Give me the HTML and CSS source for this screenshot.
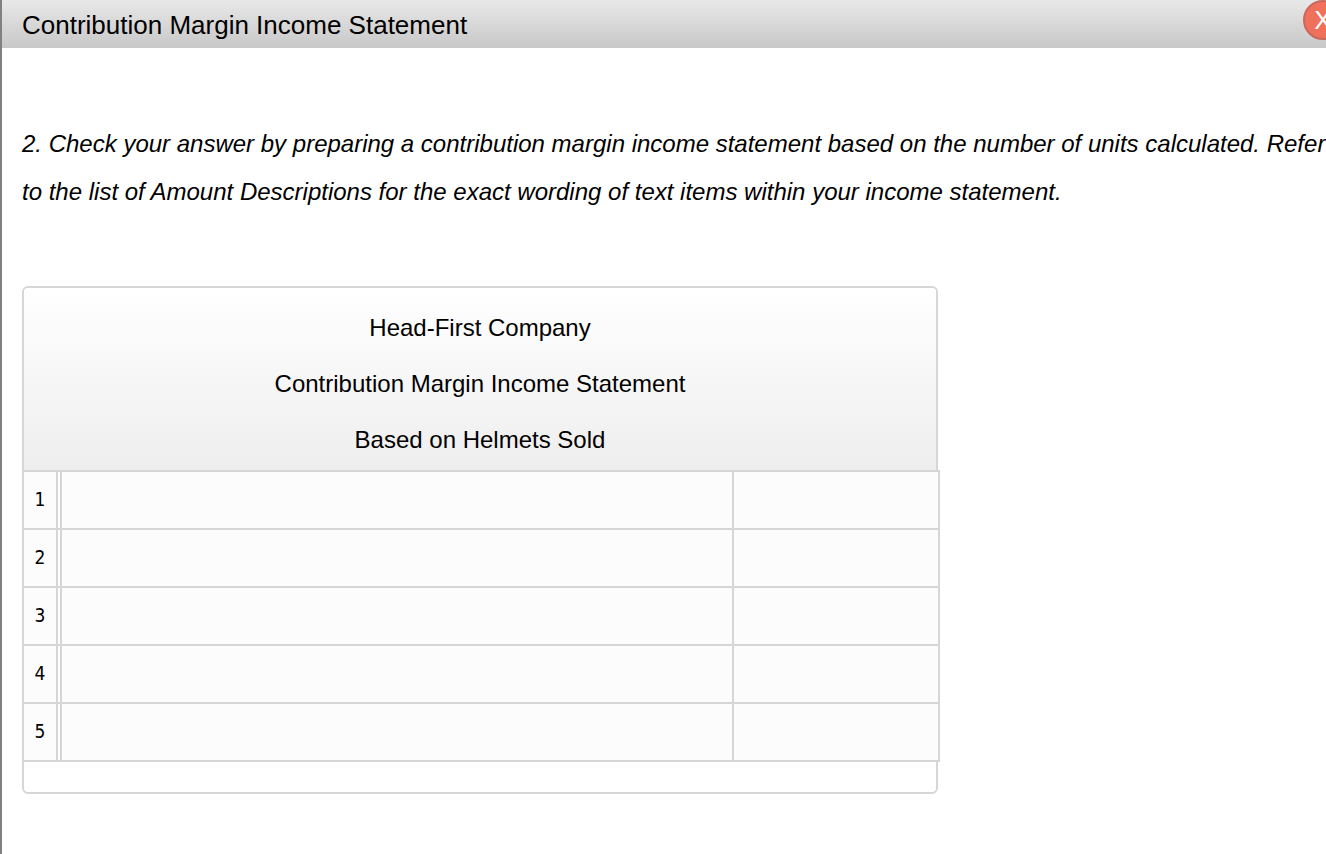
FILE: index.html

```html
<!DOCTYPE html>
<html lang="en">
<head>
  <meta charset="UTF-8" />
  <title>Contribution Margin Income Statement</title>
  <link rel="stylesheet" href="styles.css">
</head>
<body>
  <div class="dialog">
    <div class="titlebar">
      <h1>Contribution Margin Income Statement</h1>
      <span class="close">X</span>
    </div>

    <div class="content">
      <p class="question">2. Check your answer by preparing a contribution margin income statement based on the number of units calculated. Refer<br>to the list of Amount Descriptions for the exact wording of text items within your income statement.</p>

      <div class="card">
        <div class="card-head">
          <div>Head-First Company</div>
          <div>Contribution Margin Income Statement</div>
          <div>Based on Helmets Sold</div>
        </div>
        <div class="rows">
          <div class="row"><div class="num">1</div><div class="cell"></div><div class="cell"></div></div>
          <div class="row"><div class="num">2</div><div class="cell"></div><div class="cell"></div></div>
          <div class="row"><div class="num">3</div><div class="cell"></div><div class="cell"></div></div>
          <div class="row"><div class="num">4</div><div class="cell"></div><div class="cell"></div></div>
          <div class="row"><div class="num">5</div><div class="cell"></div><div class="cell"></div></div>
        </div>
        <div class="card-foot"></div>
      </div>
    </div>
  </div>
</body>
</html>
```

FILE: styles.css

```css
html, body {
  margin: 0;
  height: 100%;
  overflow: hidden;
  background: #fff;
}
body {
  color: #000;
  font-family: "Liberation Sans", Arial, sans-serif;
}
.dialog {
  min-height: 100%;
  border-left: 2px solid #808080;
  box-sizing: border-box;
  position: relative;
}
.titlebar {
  height: 48px;
  display: flex;
  align-items: center;
  padding-left: 20px;
  background: linear-gradient(#e8e8e8, #c8c8c8);
}
h1 {
  margin: 0;
  padding-top: 2px;
  font-size: 26px;
  font-weight: normal;
  line-height: 46px;
}
.close {
  position: absolute;
  left: 1301px;
  top: 0;
  width: 40px;
  height: 40px;
  box-sizing: border-box;
  border: 2px solid #c9685c;
  border-radius: 50%;
  background: #ef705b;
  color: #fff;
  font-size: 26px;
  line-height: 36px;
  text-align: center;
}
.content {
  padding: 72px 0 0 20px;
}
.question {
  margin: 0;
  font-size: 24px;
  font-style: italic;
  line-height: 48px;
  white-space: nowrap;
}
.card {
  margin-top: 70px;
  width: 916px;
  box-sizing: border-box;
  border: 2px solid #d6d6d6;
  border-radius: 6px;
}
.card-head {
  height: 182px;
  padding-top: 12px;
  box-sizing: border-box;
  background: linear-gradient(#fff, #eee);
  border-radius: 4px 4px 0 0;
  font-size: 24px;
  text-align: center;
}
.card-head div {
  height: 56px;
  line-height: 56px;
}
.rows {
  margin: 0 -4px 0 -2px;
  border-right: 2px solid #d6d6d6;
  border-top: 2px solid #d6d6d6;
}
.row {
  display: grid;
  grid-template-columns: 36px 674px 1fr;
  height: 58px;
  box-sizing: border-box;
  border-bottom: 2px solid #d6d6d6;
}
.num {
  border-left: 2px solid #d6d6d6;
  border-right: 2px solid #d6d6d6;
  background: #fcfcfc;
  font-family: "DejaVu Sans Condensed", "DejaVu Sans", sans-serif;
  font-size: 19px;
  line-height: 55px;
  text-align: center;
}
.cell {
  margin-left: 2px;
  border-left: 2px solid #d6d6d6;
  background: #fcfcfc;
}
.cell + .cell {
  margin-left: 0;
}
.card-foot {
  height: 30px;
}
```
